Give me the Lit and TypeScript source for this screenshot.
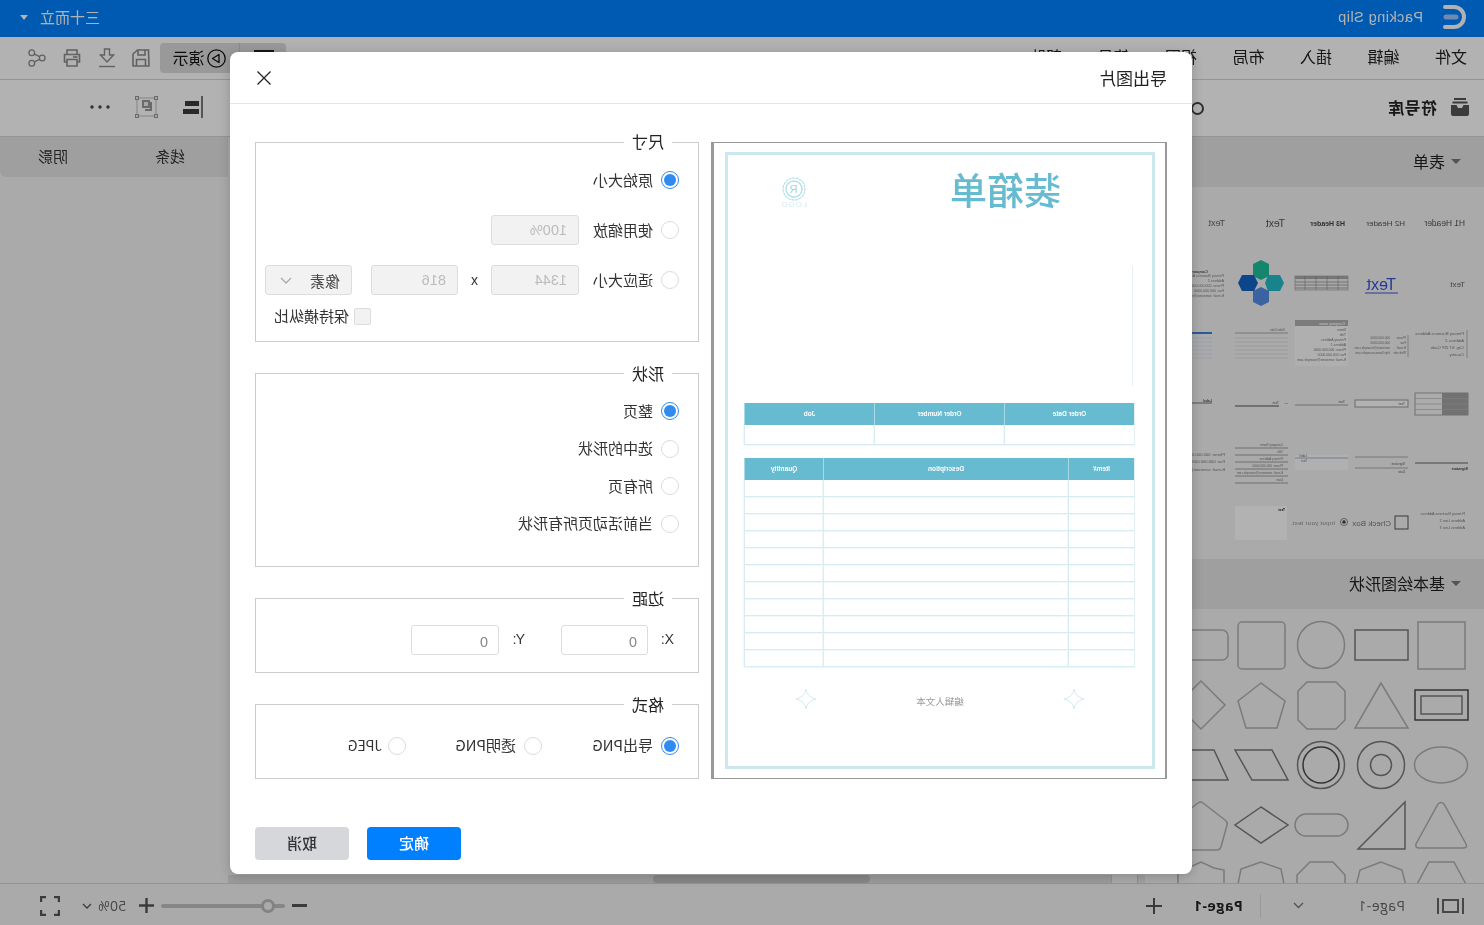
import { LitElement, html, svg, css } from "lit";
import { customElement } from "lit/decorators.js";

const G = "#b0b0b0";
const D = "#7a7a7a";
const T = "#7a7a7a";

const lines = (x: number, w: number, ys: number[], c = "#8f8f8f", sw = 0.7) =>
  ys.map((y) => svg`<line x1=${x} x2=${x + w} y1=${y} y2=${y} stroke=${c} stroke-width=${sw}></line>`);
const texts = (x: number, items: [number, string][], size = 4.2, c = T) =>
  items.map(([y, s]) => svg`<text x=${x} y=${y} font-size=${size} fill=${c}>${s}</text>`);

const formCells = [
  svg`<text x="6" y="33" font-size="8.4" fill="#555">H1 Header</text>`,
  svg`<text x="6" y="33" font-size="8" fill="#555">H2 Header</text>`,
  svg`<text x="6" y="33" font-size="7" font-weight="700" fill="#444">H3 Header</text>`,
  svg`<text x="6" y="34" font-size="10.5" fill="#555">Text</text>`,
  svg`<text x="6" y="33" font-size="9" fill="#666">Text</text>`,

  svg`<text x="6" y="34" font-size="8" fill="#666">Text</text>`,
  svg`<text x="15" y="37" font-size="16" fill="#3554d8">Text</text><line x1="13" x2="46" y1="40" y2="40" stroke="#3554d8"></line>`,
  svg`<rect x="3" y="23" width="53" height="14" fill="#efefef" stroke="#a0a0a0" stroke-width=".7"></rect><rect x="3" y="23" width="53" height="3" fill="#a8a8a8"></rect>${lines(3, 53, [29, 32, 35], "#888")}${[13, 24, 35, 46].map((x) => svg`<line x1=${x} x2=${x} y1="23" y2="37" stroke="#888" stroke-width=".6"></line>`)}`,
  svg`<path d="M30 7L38 11V23L30 27 22 23V11z" fill="#1fc09c"></path><path d="M30 34L38 38V49L30 53 22 49V38z" fill="#558ee8"></path><path d="M7 30L11 22H23L26 30 23 38H11z" fill="#24bccb"></path><path d="M33 30L37 22H49L53 30 49 38H37z" fill="#1464c8"></path>`,
  svg`<text x="23" y="20" font-size="3.8" font-weight="700" fill="#555">Company name</text>${texts(7, [[24, "Primary Business Address"], [29, "Address 2"], [34, "Phone: 000.000.0000"], [39, "Fax: 000.000.0000"], [44, "E-mail: someone@example.com"]], 3.6)}`,

  svg`<line x1="4" x2="4" y1="17" y2="45" stroke="#999" stroke-width=".7"></line>${texts(7, [[22, "Primary Business Address"], [29, "Address 2"], [36, "City, ST ZIP Code"], [43, "Country"]], 4.2)}`,
  svg`<line x1="3" x2="3" y1="22" y2="44" stroke="#999" stroke-width=".7"></line>${texts(5, [[26, "Phone:"], [31, "Fax:"], [36, "E-mail:"], [41, "Web site:"]], 3.2)}${texts(21, [[26, "000.000.0000"], [31, "000.000.0000"], [36, "someone@example.com"], [41, "http://www.example.com"]], 3.2)}`,
  svg`<rect x="3" y="7" width="53" height="46" fill="#fbfbfb"></rect><rect x="3" y="7" width="53" height="6" fill="#b0b0b0"></rect><text x="6" y="11.5" font-size="3.5" fill="#fff" font-weight="700">Company name</text>${texts(5, [[18, "Name"], [23, "Title"], [28, "Primary Address"], [33, "Address 2"], [38, "Phone: 000.000.0000"], [43, "Fax: 000.000.0000"], [48, "E-mail: someone@example.com"]], 3.4)}`,
  svg`${lines(3, 53, [20], "#aaa", 1)}${lines(3, 53, [25, 29, 33, 37, 41, 45], "#e6e6e6", 1.6)}<text x="6" y="18" font-size="3" fill="#777">Order Date</text>`,
  svg`${lines(19, 36, [20], "#3f7ee0", 2)}${lines(19, 36, [25, 29, 33, 37, 41, 45], "#e3e9f4", 1.6)}`,

  svg`<rect x="3" y="20" width="53" height="22" fill="#f6f6f6" stroke="#a2a2a2"></rect><rect x="3" y="20" width="26" height="22" fill="#a4a4a4"></rect>${lines(3, 53, [25.5, 31, 36.5], "#b8b8b8", .7)}`,
  svg`<rect x="3" y="27" width="53" height="7" fill="#fff" stroke="#999"></rect><text x="6" y="32" font-size="3.5" fill="#666">Text</text>`,
  svg`${lines(3, 53, [32], "#a0a0a0", 1)}<text x="6" y="30" font-size="3.5" fill="#666">Text</text>`,
  svg`${lines(12, 44, [33], "#888", 1.4)}<text x="12" y="31" font-size="3.5" fill="#666">Text</text><text x="3" y="31" font-size="3.5" fill="#333">—</text>`,
  svg`${lines(19, 36, [30], "#555", .8)}<text x="19" y="29" font-size="3.5" fill="#555" font-weight="700">Label</text>`,

  svg`${lines(3, 53, [30], "#666", 1)}<text x="3" y="37" font-size="3.6" font-weight="700" fill="#444">Signature</text>`,
  svg`${lines(3, 53, [24, 35], "#999", .8)}<text x="6" y="32" font-size="3.2" fill="#666">Signature</text><text x="6" y="40" font-size="3.2" fill="#666">Date</text>`,
  svg`<rect x="3" y="22" width="53" height="15" fill="#fdfdfd"></rect>${lines(3, 53, [25], "#9fb2cc", 1)}<text x="44" y="24" font-size="3" fill="#666">Label</text><text x="44" y="29" font-size="3" fill="#666">Text</text>`,
  svg`${lines(3, 53, [15, 22, 29, 36, 43, 50], "#8a8a8a", .8)}${texts(8, [[13, "Company Name"], [20, "Title"], [27, "Primary Address"], [34, "Phone: 000.000.0000"], [41, "E-mail: someone@example.com"], [48, "Date"]], 3.2)}`,
  svg`${texts(6, [[23, "Phone: 000.000.0000"], [30, "Fax: 000.000.0000"], [38, "E-mail: someone@example.com"]], 4.2)}`,

  svg`${texts(6, [[22, "Primary Business Address"], [29, "Address Line 2"], [36, "Address Line 3"]], 3.8)}`,
  svg`<rect x="3" y="23" width="13" height="13" fill="none" stroke="#555"></rect><text x="20" y="33" font-size="8" fill="#777">Check Box</text>`,
  svg`<circle cx="7" cy="29" r="3.6" fill="none" stroke="#777" stroke-width=".8"></circle><circle cx="7" cy="29" r="1.8" fill="#444"></circle><text x="16" y="32" font-size="6" letter-spacing=".3" fill="#888">Input your text.</text>`,
  svg`<rect x="4" y="13" width="52" height="34" fill="#fff"></rect><text x="6" y="18" font-size="3.4" font-weight="700" fill="#222">Text</text>`,
  svg``,
];

const shapeCells = [
  svg`<rect x="6" y="7" width="47" height="47" stroke=${G}></rect>`,
  svg`<rect x="3" y="15" width="53" height="30" stroke=${D}></rect>`,
  svg`<circle cx="30" cy="30" r="23.5" stroke=${G}></circle>`,
  svg`<rect x="6" y="7" width="47" height="47" rx="4" stroke=${G}></rect>`,
  svg`<rect x="3" y="15" width="53" height="30" rx="6" stroke=${G}></rect>`,

  svg`<rect x="3" y="15" width="53" height="30" stroke="#4a4a4a"></rect><rect x="9" y="21" width="41" height="18" stroke=${D}></rect>`,
  svg`<path d="M30 8L56 53H3z" stroke=${G}></path>`,
  svg`<path d="M15 7H44L53 16V45L44 54H15L6 45V16z" stroke=${G}></path>`,
  svg`<path d="M30 8L53 26 45 53H14L6 26z" stroke=${G}></path>`,
  svg`<path d="M30 6L54 30 30 54 6 30z" stroke=${G}></path>`,

  svg`<ellipse cx="30" cy="30" rx="26.5" ry="18" stroke=${G}></ellipse>`,
  svg`<circle cx="30" cy="30" r="23.5" stroke=${D}></circle><circle cx="30" cy="30" r="10.5" stroke=${D}></circle>`,
  svg`<circle cx="30" cy="30" r="23.5" stroke=${D}></circle><circle cx="30" cy="30" r="18" stroke="#4a4a4a"></circle>`,
  svg`<path d="M19 15H56L39 45H3z" stroke=${D}></path>`,
  svg`<path d="M17 15H43L56 45H3z" stroke=${D}></path>`,

  svg`<path d="M27 9Q30 6 33 9L55 49Q56 53 52 53H8Q3 53 5 49z" stroke=${G}></path>`,
  svg`<path d="M6 7V54H53z" stroke=${D}></path>`,
  svg`<rect x="3" y="19" width="53" height="22" rx="11" stroke=${G}></rect>`,
  svg`<path d="M30 12L56 30 30 48 3 30z" stroke=${D}></path>`,
  svg`<path d="M28 8Q30 6 33 8L54 24Q57 27 56 30L49 52Q48 55 45 55H14Q11 55 10 52L4 30Q3 27 6 25z" stroke=${G}></path>`,

  svg`<path d="M17 7H42L56 33H3z" stroke=${G}></path>`,
  svg`<path d="M30 7L51 15 56 35H4L9 15z" stroke=${G}></path>`,
  svg`<path d="M18 7H41L54 20V40H6V20z" stroke=${G}></path>`,
  svg`<path d="M30 7L50 14 54 34H6L10 14z" stroke=${G}></path>`,
  svg`<path d="M30 7L43 13 53 15V34H7V15L17 13z" stroke=${G}></path>`,
];

@customElement("paper-table")
class PaperTable extends LitElement {
  static properties = { cols: { type: Array }, heads: { type: Array }, rows: { type: Number }, rowH: { type: Number } };
  cols: number[] = [];
  heads: string[] = [];
  rows = 1;
  rowH = 17;
  static styles = css`
    :host { display: block; }
    .t { display: inline-grid; vertical-align: top; border-left: 1px solid #e3f1f5; border-bottom: 1px solid #e3f1f5; }
    .h { height: 22px; background: #67bbd0; color: #fff; font: 700 6.5px/22px "Liberation Sans", sans-serif; text-align: center; border-right: 1px solid #a7d8e4; filter: blur(.35px); }
    .c { border-right: 1px solid #d8edf3; border-bottom: 1px solid #d8edf3; box-sizing: border-box; box-shadow: 0 1px 0 #eef7fa, 1px 0 0 #eef7fa; }
  `;
  render() {
    const count = this.rows * this.cols.length;
    return html`<div class="t" style="grid-template-columns:${this.cols.map((c) => c + "px").join(" ")}">
      ${this.heads.map((h) => html`<div class="h">${h}</div>`)}
      ${Array.from({ length: count }, () => html`<div class="c" style="height:${this.rowH}px"></div>`)}
    </div>`;
  }
}

@customElement("app-root")
class AppRoot extends LitElement {
  static styles = css`
    :host { display: block; width: 1484px; height: 925px; overflow: hidden; font-family: "Open Sans", "Noto Sans CJK SC", sans-serif; }
    * { box-sizing: border-box; }
    svg { display: block; flex: none; }
    .app { position: relative; width: 1484px; height: 925px; transform: scaleX(-1); display: flex; flex-direction: column; background: #f4f4f4; overflow: hidden; color: #222; }

    .title { height: 37px; background: #0082ff; color: #fff; display: flex; align-items: center; padding: 0 20px 3px 17px; }
    .title .name { margin-left: 20px; font: 14.5px "Liberation Sans", sans-serif; letter-spacing: .45px; }
    .title .who { margin: 0 0 1px auto; font-size: 15px; font-family: "Noto Sans CJK SC", sans-serif; }
    .tri { width: 0; height: 0; border-left: 4px solid transparent; border-right: 4px solid transparent; border-top: 5px solid currentColor; margin-left: 12px; flex: none; }

    .menu { height: 43px; background: #fff; border-bottom: 1px solid #d5d5d5; display: flex; align-items: center; padding: 0 28px 5px 17px; font: 16px "Noto Sans CJK SC", sans-serif; gap: 35.5px; }
    .menu .tools { margin: 5px 0 0 auto; display: flex; align-items: center; gap: 17.5px; }
    .play { width: 126px; height: 30px; background: #dbdbdb; border-radius: 4px; display: flex; align-items: center; margin-right: -7.5px; padding-left: 12px; font-size: 16px; }
    .play .sep { width: 1px; height: 30px; background: #c6c6c6; margin: 0 13px 0 14px; }
    .play .lbl { margin: 0 0 2px 3px; color: #111; }

    .bar { height: 57px; background: #fff; border-bottom: 1px solid #d5d5d5; display: flex; align-items: center; padding: 0 90px 2px 15px; }
    .bar .lib { margin-left: 14px; font: 700 16px "Noto Sans CJK SC", sans-serif; letter-spacing: .4px; color: #222; }
    .ring { width: 13px; height: 13px; margin: 2px 0 0 184px; border-radius: 50%; border: 2px solid #444; }
    .bar .end { margin-left: auto; display: flex; align-items: center; gap: 25px; }

    .main { flex: 1; display: flex; min-height: 0; }
    .panel { width: 339px; flex: none; display: flex; flex-direction: column; overflow: hidden; background: #f4f4f4; }
    .ph { height: 50px; flex: none; background: #e4e4e4; display: flex; align-items: center; padding: 0 0 2px 23px; font: 16px "Noto Sans CJK SC", sans-serif; color: #222; }
    .ph .tri { margin: 0 6px 0 0; color: #777; border-left-width: 5px; border-right-width: 5px; }
    .grid { display: grid; grid-template-columns: repeat(5, 60px); grid-auto-rows: 60px; padding: 6px 0 6px 13px; flex: none; }
    .shapes { flex: 1; min-height: 0; overflow: hidden; }
    .grid svg { overflow: visible; }
    .grid.f svg { filter: blur(.35px); font-family: "Liberation Sans", sans-serif; }
    .grid.s svg { filter: blur(.25px); }
    .grid.s svg * { fill: none; stroke-width: 1.5; }
    .canvas { flex: 1; display: flex; flex-direction: column; justify-content: flex-end; min-width: 0; background: #f4f4f4; }
    .scroll { height: 8px; display: flex; background: #dfdfdf; }
    .scroll .a { width: 8px; background: #e6e6e6; border-right: 1px solid #cfcfcf; }
    .scroll .b { width: 26px; background: #f4f4f4; border-right: 1px solid #cfcfcf; }
    .scroll .th { width: 217px; margin-left: 241px; background: #c2c2c2; border-radius: 4px; }
    .side { width: 228px; flex: none; }
    .tabs { height: 40px; background: #e4e4e4; border-bottom-right-radius: 6px; display: flex; font: 15px "Noto Sans CJK SC", sans-serif; color: #333; align-items: center; padding: 0 0 3px 43px; gap: 87px; }

    .status { height: 42px; flex: none; background: #f4f4f4; border-top: 1px solid #d5d5d5; display: flex; align-items: center; padding: 2px 0 0 20px; font-size: 14px; color: #666; }
    .status .p1 { margin-left: 32px; letter-spacing: .5px; }
    .status .chev { margin-left: 54px; }
    .status .div { width: 1px; height: 24px; background: #dcdcdc; margin-left: 32px; }
    .status .p2 { margin-left: 17px; font-weight: 700; color: #222; letter-spacing: .6px; }
    .status .plus { margin-left: 31px; }
    .status .r { margin-left: auto; display: flex; align-items: center; padding-right: 40px; }
    .slider { width: 124px; height: 4px; background: #c0c0c0; margin: 0 7px; position: relative; border-radius: 2px; }
    .knob { position: absolute; left: 10px; top: -5px; width: 14px; height: 14px; border-radius: 50%; background: #f4f4f4; border: 3px solid #bcbcbc; }
    .status .z { margin: 0 0 0 13px; letter-spacing: .2px; }
    .status .zc { margin: 0 22px 0 6px; }

    .overlay { position: absolute; inset: 0; background: rgba(0, 0, 0, .3); }
    .modal { position: absolute; left: 292px; top: 52px; width: 962px; height: 822px; background: #fff; border-radius: 8px; box-shadow: 0 2px 12px rgba(0,0,0,.2); display: flex; flex-direction: column; font: 15px "Noto Sans CJK SC", sans-serif; color: #333; }
    .mh { height: 52px; flex: none; border-bottom: 1px solid #e4e4e4; display: flex; align-items: center; justify-content: space-between; padding: 0 27px 0 25px; font-size: 17px; color: #222; }
    .mb { display: flex; gap: 12px; padding: 27px 25px 0; }

    .pv { width: 456px; height: 637px; margin-top: 11px; border: 1px solid #999; border-left-width: 2px; border-right-width: 3px; padding: 9px 11px 9px 10px; flex: none; }
    .paper { height: 617px; border: 3px solid #cce8ef; padding: 16px 0 0 17px; }
    .ptop { display: flex; height: 37px; }
    .ptitle { font: 500 37px/37px "Noto Sans CJK SC", sans-serif; color: #67bbd0; margin-left: 74px; filter: blur(.3px); }
    .plogo { margin: 6px 0 0 142px; }
    .vl { width: 1px; height: 120px; margin: 58px 0 17px 2px; background: #e6f3f6; }
    paper-table.two { margin-top: 12px; }
    .pfoot { display: flex; align-items: center; width: 391px; margin-top: 21px; padding-left: 51px; }
    .pfoot span { font-size: 9.5px; color: #9a9a9a; width: 248px; text-align: center; filter: blur(.4px); margin-top: 4px; }

    form { width: 444px; flex: none; display: flex; flex-direction: column; gap: 20px; }
    fieldset { margin: 0; padding: 0 0 0 19px; border: 1px solid #ccc; min-width: 0; }
    legend { margin-left: 7px; padding: 0 8px; font-size: 16px; line-height: 22px; color: #222; }
    .fs1 { height: 211px; padding-top: 12px; }
    .fs1 legend { padding-bottom: 2px; line-height: 20px; }
    .fs2 { height: 205px; padding-top: 16px; }
    .fs3 { height: 86px; padding: 16px 0 0 24px; }
    .fs3 legend { margin-left: 2px; }
    .fs4 { height: 86px; padding-top: 19px; }
    .row { display: flex; align-items: center; height: 30px; margin-bottom: 20px; }
    .fs2 .row { height: 22px; margin-bottom: 15.5px; }
    .fs4 .row { height: 18px; margin: 0; display: grid; grid-template-columns: 137px 136px auto; }
    .opt { display: flex; align-items: center; white-space: nowrap; }
    .radio { width: 18px; height: 18px; border-radius: 50%; border: 1px solid #dcdcdc; margin-right: 8px; flex: none; background: #fff; }
    .radio.on { border-color: #2f8bf0; display: flex; align-items: center; justify-content: center; }
    .radio.on::after { content: ""; width: 12px; height: 12px; border-radius: 50%; background: #2f8bf0; }
    .t { margin-bottom: 2px; }
    .lw { width: 74px; flex: none; }
    .jp { font-size: 14px; margin-left: -2px; }
    .inp { height: 30px; width: 88px; flex: none; border: 1px solid #ddd; border-radius: 3px; padding: 0 11px; display: flex; align-items: center; font: 14.5px "Liberation Sans", sans-serif; color: #777; }
    .inp.dis { background: #f2f2f2; color: #bbb; }
    .inp.w87 { width: 87px; }
    .x { width: 33px; flex: none; text-align: center; font: 14px "Liberation Sans", sans-serif; }
    .inp.sel { margin-left: 19px; justify-content: space-between; color: #444; font: 15px "Noto Sans CJK SC", sans-serif; padding-right: 14px; }
    .keep { display: flex; align-items: center; margin: -7px 0 0 308px; height: 17px; white-space: nowrap; }
    .cb { width: 17px; height: 17px; background: #f2f2f2; border: 1px solid #ddd; border-radius: 2px; margin-right: 5px; flex: none; }
    .xy { display: flex; align-items: center; }
    .xl { width: 26px; flex: none; font: 14px "Liberation Sans", sans-serif; margin-top: -2px; }
    .gapx { margin-left: 36px; }
    .inp.v { padding-left: 10px; padding-top: 3px; color: #888; }

    .mf { margin-top: auto; padding: 0 25px 14px 0; display: flex; justify-content: flex-end; gap: 18px; }
    .btn { width: 94px; height: 33px; border-radius: 4px; display: flex; align-items: center; justify-content: center; font-size: 15px; font-weight: 500; padding-bottom: 2px; }
    .ok { background: #0080ff; color: #fff; }
    .no { background: #d6d7db; color: #333; }
  `;

  render() {
    return html`<div class="app">
      <div class="title">
        <svg width="24" height="26" viewBox="0 0 24 26" fill="none"><path d="M22 3H13A10 10 0 0 0 13 23H22" stroke="#fff" stroke-width="4" stroke-linecap="round"></path><path d="M11 13H21" stroke="#9cc7ff" stroke-width="5" stroke-linecap="round"></path></svg>
        <span class="name">Packing Slip</span>
        <span class="who">三十而立</span><span class="tri"></span>
      </div>

      <div class="menu">
        <span>文件</span><span>编辑</span><span>插入</span><span>布局</span><span>视图</span><span>符号</span><span>帮助</span>
        <div class="tools">
          <div class="play">
            <svg width="20" height="22" viewBox="0 0 20 22" fill="none"><path d="M0 4H20" stroke="#222" stroke-width="2"></path></svg>
            <span class="sep"></span>
            <svg width="19" height="19" viewBox="0 0 19 19" fill="none" stroke="#111" stroke-width="1.3"><circle cx="9.5" cy="9.5" r="8.7"></circle><path d="M7 5.5L13.5 9.5 7 13.5z" stroke-linejoin="round"></path></svg>
            <span class="lbl">演示</span>
          </div>
          <svg width="18" height="18" viewBox="0 0 18 18" fill="none" stroke="#8c8c8c" stroke-width="1.6"><path d="M1.5 1H12.5L17 5V17H1z"></path><path d="M5 1V6H12V1M4.5 17V10.5H13.5V17"></path></svg>
          <svg width="16" height="20" viewBox="0 0 16 20" fill="none" stroke="#8c8c8c" stroke-width="1.4"><path d="M5.5 1H10.5V7H14.5L8 14 1.5 7H5.5z"></path><path d="M0 18.5H16"></path></svg>
          <svg width="18" height="18" viewBox="0 0 18 18" fill="none" stroke="#8c8c8c" stroke-width="1.6"><path d="M4 5V1H14V5M4 13H1.5V5.5H16.5V13H14"></path><path d="M4 10.5H14V17H4z"></path><path d="M3.5 8H8"></path></svg>
          <svg width="18" height="18" viewBox="0 0 19 18" fill="none" stroke="#8c8c8c" stroke-width="1.4"><circle cx="4" cy="9" r="3"></circle><circle cx="15" cy="3.5" r="3"></circle><circle cx="15" cy="14.5" r="3"></circle><path d="M6.7 7.6L12.3 4.9M6.7 10.4L12.3 13.1"></path></svg>
        </div>
      </div>

      <div class="bar">
        <svg width="18" height="18" viewBox="0 0 18 18" fill="#555"><rect x="3" y="0" width="12" height="2"></rect><rect x="1.5" y="3.5" width="15" height="2"></rect><path d="M0 7H5.5L7 10H11L12.5 7H18V16Q18 18 16 18H2Q0 18 0 16z"></path></svg>
        <span class="lib">符号库</span>
        <span class="ring"></span>
        <div class="end">
          <svg width="20" height="22" viewBox="0 0 20 22"><rect x="0" y="0" width="2" height="22" fill="#7a7a7a"></rect><rect x="4" y="5" width="14" height="5" fill="#3c3c3c"></rect><rect x="4" y="13" width="16" height="5" fill="#3c3c3c"></rect></svg>
          <svg width="23" height="22" viewBox="0 0 23 22" fill="none"><rect x="2" y="2" width="19" height="18" stroke="#bdbdbd"></rect><g fill="#f0f0f0" stroke="#999"><rect x=".5" y=".5" width="3" height="3"></rect><rect x="19.5" y=".5" width="3" height="3"></rect><rect x=".5" y="18.5" width="3" height="3"></rect><rect x="19.5" y="18.5" width="3" height="3"></rect></g><path d="M7 6V14H13" stroke="#999" stroke-width="2"></path><rect x="9" y="5" width="6" height="6" stroke="#999" stroke-width="2" fill="#eee"></rect></svg>
          <svg width="20" height="4" viewBox="0 0 20 4" fill="#444"><circle cx="2" cy="2" r="1.7"></circle><circle cx="10" cy="2" r="1.7"></circle><circle cx="18" cy="2" r="1.7"></circle></svg>
        </div>
      </div>

      <div class="main">
        <div class="panel">
          <div class="ph"><span class="tri"></span>表单</div>
          <div class="grid f">${formCells.map((c) => html`<svg width="60" height="60" viewBox="0 0 60 60">${c}</svg>`)}</div>
          <div class="ph"><span class="tri"></span>基本绘图形状</div>
          <div class="grid s shapes">${shapeCells.map((c) => html`<svg width="60" height="60" viewBox="0 0 60 60">${c}</svg>`)}</div>
        </div>
        <div class="canvas">
          <div class="scroll"><span class="a"></span><span class="b"></span><span class="th"></span></div>
        </div>
        <div class="side">
          <div class="tabs"><span>线条</span><span>阴影</span></div>
        </div>
      </div>

      <div class="status">
        <svg width="27" height="16" viewBox="0 0 27 16" fill="none" stroke="#666"><path d="M1 0V16M26 0V16" stroke-width="2"></path><rect x="6" y="2" width="15" height="12" stroke-width="2"></rect></svg>
        <span class="p1">Page-1</span>
        <svg class="chev" width="11" height="7" viewBox="0 0 11 7" fill="none" stroke="#777" stroke-width="1.4"><path d="M1 1L5.5 5.5 10 1"></path></svg>
        <span class="div"></span>
        <span class="p2">Page-1</span>
        <svg class="plus" width="16" height="16" viewBox="0 0 16 16" stroke="#555" stroke-width="2"><path d="M0 8H16M8 0V16"></path></svg>
        <div class="r">
          <svg width="15" height="3" viewBox="0 0 15 3"><rect width="15" height="3" fill="#555"></rect></svg>
          <div class="slider"><span class="knob"></span></div>
          <svg width="15" height="15" viewBox="0 0 15 15" stroke="#555" stroke-width="2.4"><path d="M0 7.5H15M7.5 0V15"></path></svg>
          <span class="z">50%</span>
          <svg class="zc" width="10" height="6" viewBox="0 0 10 6" fill="none" stroke="#555" stroke-width="1.3"><path d="M1 1L5 5 9 1"></path></svg>
          <svg width="20" height="20" viewBox="0 0 20 20" fill="none" stroke="#555" stroke-width="2.4"><path d="M1 6V1H6M14 1H19V6M19 14V19H14M6 19H1V14"></path></svg>
        </div>
      </div>

      <div class="overlay">
        <div class="modal">
          <div class="mh">
            <span>导出图片</span>
            <svg width="14" height="14" viewBox="0 0 14 14" stroke="#222" stroke-width="1.3"><path d="M.5 .5L13.5 13.5M13.5 .5L.5 13.5"></path></svg>
          </div>
          <div class="mb">
            <div class="pv">
              <div class="paper">
                <div class="ptop">
                  <span class="ptitle">装箱单</span>
                  <svg class="plogo" width="28" height="31" viewBox="0 0 28 31" fill="none" stroke="#b5dfe9"><circle cx="14" cy="12" r="11" stroke-dasharray="3 .6" stroke-width="1.2"></circle><circle cx="14" cy="12" r="8" stroke-width="1.4"></circle><text x="10.5" y="16" font-size="11" font-family="Liberation Sans" stroke="none" fill="#9fd3df">R</text><text x="1" y="29.5" font-size="7.5" letter-spacing="1.2" font-family="Liberation Sans" stroke="none" fill="#d3e8ee">LOGO</text></svg>
                </div>
                <div class="vl"></div>
                <paper-table .cols=${[130, 130, 130]} .heads=${["Order Date", "Order Number", "Job"]} .rows=${1} .rowH=${20}></paper-table>
                <paper-table class="two" .cols=${[66, 245, 79]} .heads=${["Item#", "Description", "Quantity"]} .rows=${11} .rowH=${17}></paper-table>
                <div class="pfoot">
                  <svg width="20" height="20" viewBox="0 0 20 20" fill="none" stroke="#d6eaf0" stroke-width="1"><path d="M10 0Q11 8 20 10 11 12 10 20 9 12 0 10 9 8 10 0z"></path></svg>
                  <span>编辑人文本</span>
                  <svg width="20" height="20" viewBox="0 0 20 20" fill="none" stroke="#d6eaf0" stroke-width="1"><path d="M10 0Q11 8 20 10 11 12 10 20 9 12 0 10 9 8 10 0z"></path></svg>
                </div>
              </div>
            </div>
            <form>
              <fieldset class="fs1">
                <legend>尺寸</legend>
                <div class="row"><span class="radio on"></span><span class="t">原始大小</span></div>
                <div class="row"><span class="radio"></span><span class="t lw">使用缩放</span><span class="inp dis">100%</span></div>
                <div class="row"><span class="radio"></span><span class="t lw">适应大小</span><span class="inp dis">1344</span><span class="x">x</span><span class="inp dis w87">816</span><span class="inp dis sel w87">像素<svg width="12" height="7" viewBox="0 0 12 7" fill="none" stroke="#aaa" stroke-width="1.3"><path d="M1 1L6 6 11 1"></path></svg></span></div>
                <div class="keep"><span class="cb"></span><span class="t">保持横纵比</span></div>
              </fieldset>
              <fieldset class="fs2">
                <legend>形状</legend>
                <div class="row"><span class="radio on"></span><span class="t">整页</span></div>
                <div class="row"><span class="radio"></span><span class="t">选中的形状</span></div>
                <div class="row"><span class="radio"></span><span class="t">所有页</span></div>
                <div class="row"><span class="radio"></span><span class="t">当前活动页所有形状</span></div>
              </fieldset>
              <fieldset class="fs3">
                <legend>边距</legend>
                <div class="xy"><span class="xl">X:</span><span class="inp v w87">0</span><span class="xl gapx">Y:</span><span class="inp v">0</span></div>
              </fieldset>
              <fieldset class="fs4">
                <legend>格式</legend>
                <div class="row">
                  <span class="opt"><span class="radio on"></span><span class="t">导出PNG</span></span>
                  <span class="opt"><span class="radio"></span><span class="t">透明PNG</span></span>
                  <span class="opt"><span class="radio"></span><span class="t jp">JPEG</span></span>
                </div>
              </fieldset>
            </form>
          </div>
          <div class="mf"><span class="btn ok">确定</span><span class="btn no">取消</span></div>
        </div>
      </div>
    </div>`;
  }
}
void PaperTable;
void AppRoot;
